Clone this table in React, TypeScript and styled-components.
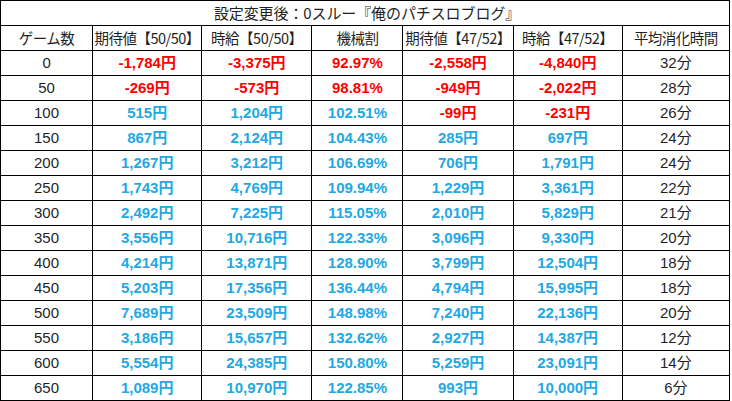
import styled, { createGlobalStyle } from 'styled-components';

const GlobalStyle = createGlobalStyle`
  html, body {
    margin: 0;
    padding: 0;
    background: #ffffff;
  }
  body {
    font-family: "Noto Sans CJK JP", "Noto Sans", sans-serif;
  }
`;

type Tone = 'neg' | 'pos' | 'plain';

const Table = styled.table`
  border-collapse: collapse;
  table-layout: fixed;
  width: 730px;
  color: #1f1f1f;
`;

const TitleCell = styled.td`
  height: 24px;
  padding: 0 0 0 4px;
  border: 1px solid #000;
  text-align: center;
  font-size: 15px;
  line-height: 24px;
  letter-spacing: -0.1px;
`;

const HeadCell = styled.th`
  height: 24px;
  padding: 0;
  border: 1px solid #000;
  font-weight: 400;
  font-size: 14.5px;
  line-height: 24px;
  text-align: center;
  white-space: nowrap;
  letter-spacing: -0.5px;
`;

const Cell = styled.td<{ $tone: Tone }>`
  height: 24px;
  padding: 0;
  border: 1px solid #000;
  text-align: center;
  white-space: nowrap;
  font-family: "Liberation Sans", "Noto Sans CJK JP", sans-serif;
  font-size: 15px;
  line-height: 24px;
  font-weight: ${(p) => (p.$tone === 'plain' ? 400 : 700)};
  color: ${(p) => (p.$tone === 'neg' ? '#ff0000' : p.$tone === 'pos' ? '#22a8e2' : '#1f1f1f')};
`;

const widths = [92, 109, 110, 91, 110, 109, 107];

const headers = ['ゲーム数', '期待値【50/50】', '時給【50/50】', '機械割', '期待値【47/52】', '時給【47/52】', '平均消化時間'];

const rows: string[][] = [
  ['0', '-1,784円', '-3,375円', '92.97%', '-2,558円', '-4,840円', '32分'],
  ['50', '-269円', '-573円', '98.81%', '-949円', '-2,022円', '28分'],
  ['100', '515円', '1,204円', '102.51%', '-99円', '-231円', '26分'],
  ['150', '867円', '2,124円', '104.43%', '285円', '697円', '24分'],
  ['200', '1,267円', '3,212円', '106.69%', '706円', '1,791円', '24分'],
  ['250', '1,743円', '4,769円', '109.94%', '1,229円', '3,361円', '22分'],
  ['300', '2,492円', '7,225円', '115.05%', '2,010円', '5,829円', '21分'],
  ['350', '3,556円', '10,716円', '122.33%', '3,096円', '9,330円', '20分'],
  ['400', '4,214円', '13,871円', '128.90%', '3,799円', '12,504円', '18分'],
  ['450', '5,203円', '17,356円', '136.44%', '4,794円', '15,995円', '18分'],
  ['500', '7,689円', '23,509円', '148.98%', '7,240円', '22,136円', '20分'],
  ['550', '3,186円', '15,657円', '132.62%', '2,927円', '14,387円', '12分'],
  ['600', '5,554円', '24,385円', '150.80%', '5,259円', '23,091円', '14分'],
  ['650', '1,089円', '10,970円', '122.85%', '993円', '10,000円', '6分'],
];

function toneOf(col: number, value: string): Tone {
  if (col === 0 || col === 6) return 'plain';
  if (value.startsWith('-')) return 'neg';
  if (col === 3 && parseFloat(value) < 100) return 'neg';
  return 'pos';
}

export default function App() {
  return (
    <>
      <GlobalStyle />
      <Table>
        <colgroup>
          {widths.map((w, i) => (
            <col key={i} style={{ width: w }} />
          ))}
        </colgroup>
        <tbody>
          <tr>
            <TitleCell colSpan={7}>設定変更後：0スルー『俺のパチスロブログ』</TitleCell>
          </tr>
          <tr>
            {headers.map((h) => (
              <HeadCell key={h}>{h}</HeadCell>
            ))}
          </tr>
          {rows.map((r) => (
            <tr key={r[0]}>
              {r.map((v, i) => (
                <Cell key={i} $tone={toneOf(i, v)}>
                  {v}
                </Cell>
              ))}
            </tr>
          ))}
        </tbody>
      </Table>
    </>
  );
}
